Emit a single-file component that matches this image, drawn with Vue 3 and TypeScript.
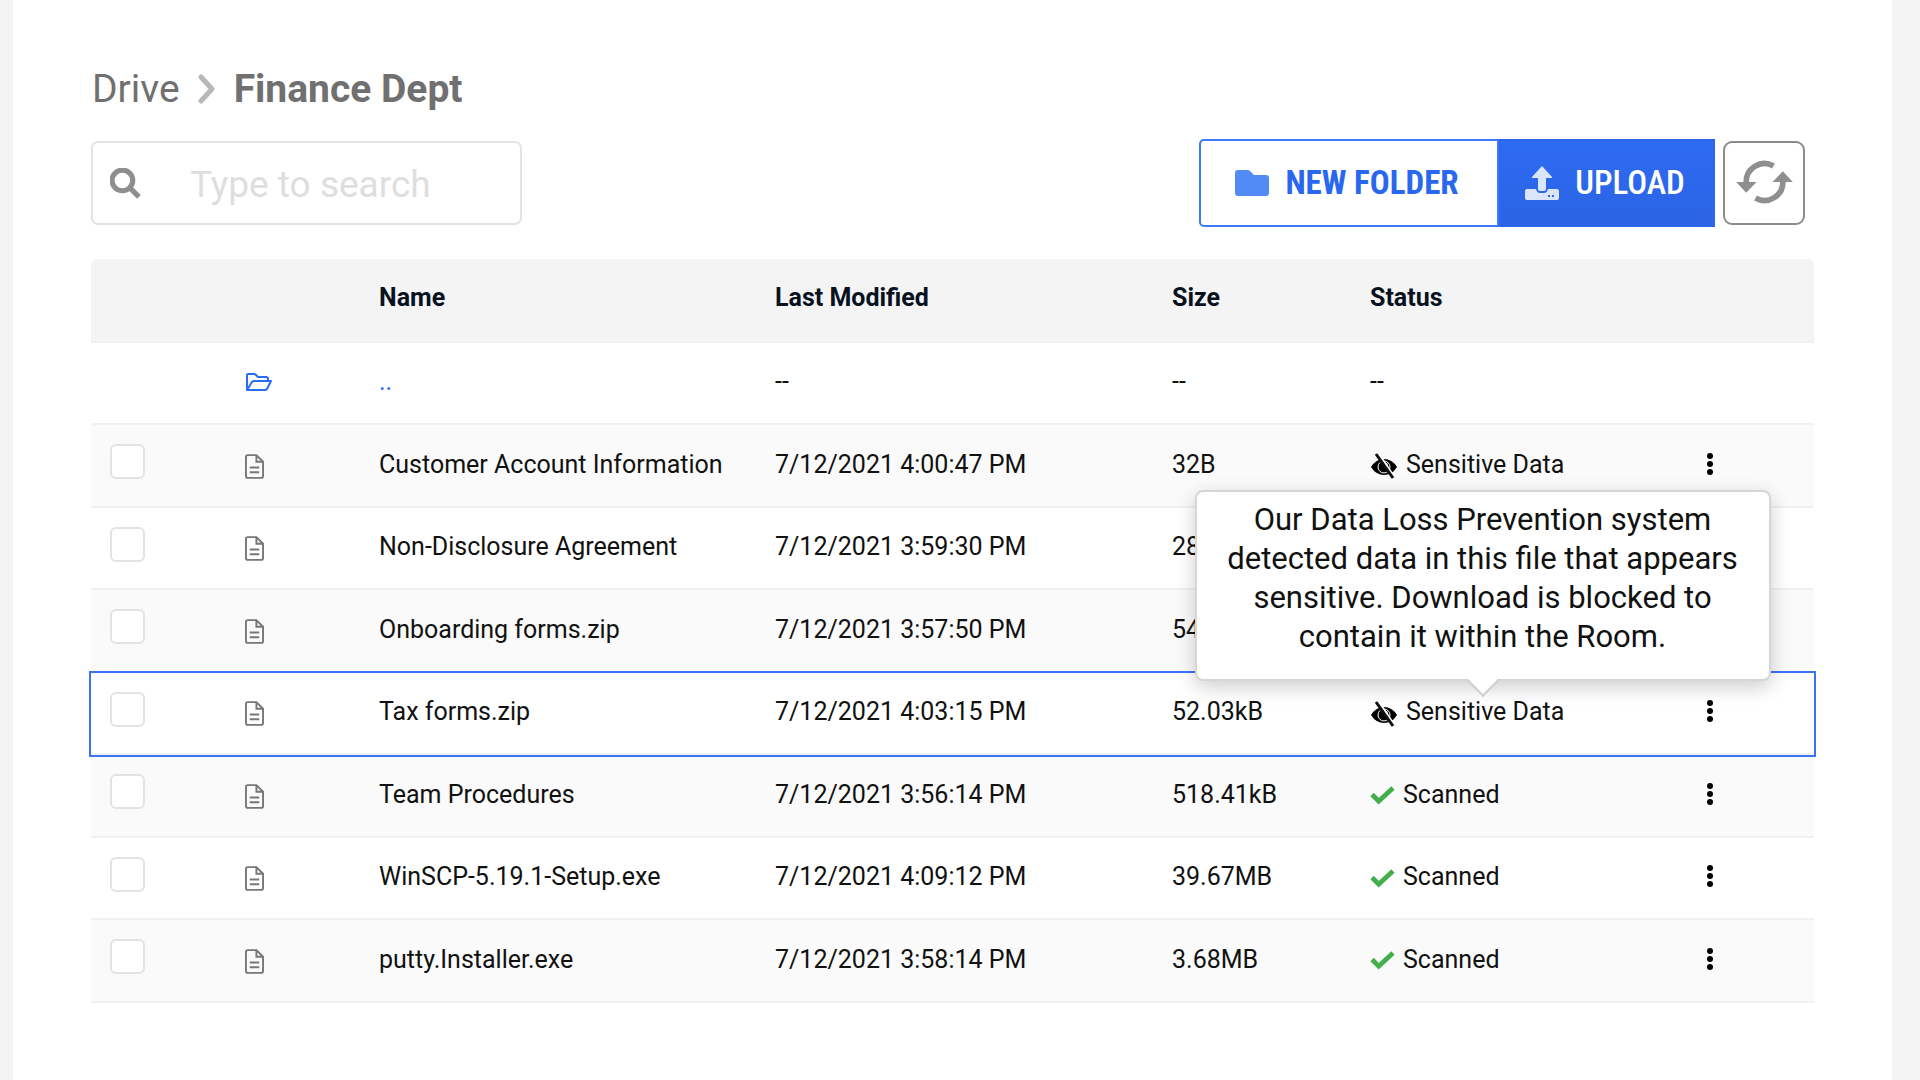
<script setup lang="ts">
import { ref } from 'vue'

type Status = 'sensitive' | 'scanned'

interface DriveFile {
  name: string
  modified: string
  size: string
  status: Status
  selected?: boolean
}

const query = ref('')

const files: DriveFile[] = [
  { name: 'Customer Account Information', modified: '7/12/2021 4:00:47 PM', size: '32B', status: 'sensitive' },
  { name: 'Non-Disclosure Agreement', modified: '7/12/2021 3:59:30 PM', size: '28', status: 'scanned' },
  { name: 'Onboarding forms.zip', modified: '7/12/2021 3:57:50 PM', size: '54', status: 'scanned' },
  { name: 'Tax forms.zip', modified: '7/12/2021 4:03:15 PM', size: '52.03kB', status: 'sensitive', selected: true },
  { name: 'Team Procedures', modified: '7/12/2021 3:56:14 PM', size: '518.41kB', status: 'scanned' },
  { name: 'WinSCP-5.19.1-Setup.exe', modified: '7/12/2021 4:09:12 PM', size: '39.67MB', status: 'scanned' },
  { name: 'putty.Installer.exe', modified: '7/12/2021 3:58:14 PM', size: '3.68MB', status: 'scanned' },
]

const labels: Record<Status, string> = { sensitive: 'Sensitive Data', scanned: 'Scanned' }
</script>

<template>
  <main class="page">
    <nav class="crumbs" aria-label="Breadcrumb">
      <a href="#" class="crumb">Drive</a>
      <svg class="chevron" viewBox="0 0 18 30" aria-hidden="true"><path d="M3 3l11 12L3 27" /></svg>
      <h1 class="current">Finance Dept</h1>
    </nav>

    <div class="toolbar">
      <label class="search">
        <svg viewBox="0 0 30 30" aria-hidden="true"><circle cx="12" cy="12" r="10" /><path d="M19 19l9 9" /></svg>
        <input v-model="query" type="text" placeholder="Type to search" aria-label="Search files" />
      </label>
      <div class="actions">
        <button type="button" class="action new-folder">
          <svg viewBox="0 0 34 26" aria-hidden="true">
            <path d="M3 0h10q1 0 2 1l4 4h12q3 0 3 3v15q0 3-3 3H3q-3 0-3-3V3q0-3 3-3z" />
          </svg>
          NEW FOLDER
        </button>
        <button type="button" class="action upload">
          <svg viewBox="0 0 34 34" aria-hidden="true">
            <path d="M17 0l10 11q1 1-1 1h-5v11q0 2-2 2h-4q-2 0-2-2V12H8q-2 0-1-1z" />
            <path fill-rule="evenodd" d="M2 23h9q1 4 4 4h4q3 0 4-4h9q2 0 2 2v7q0 2-2 2H2q-2 0-2-2v-7q0-2 2-2zM23 29v2h2v-2zM27 29v2h2v-2z" />
          </svg>
          UPLOAD
        </button>
      </div>
      <button type="button" class="refresh" aria-label="Refresh">
        <svg viewBox="0 0 170 126" aria-hidden="true">
          <path class="arc" d="M30 66A55 55 0 0 1 112 15" />
          <path class="head" d="M0 63h61L30 95z" />
          <g transform="rotate(180 85 63)">
            <path class="arc" d="M30 66A55 55 0 0 1 112 15" />
            <path class="head" d="M0 63h61L30 95z" />
          </g>
        </svg>
      </button>
    </div>

    <table class="files">
      <colgroup>
        <col class="c-check" /><col class="c-icon" /><col class="c-name" /><col class="c-date" />
        <col class="c-size" /><col class="c-status" /><col class="c-menu" />
      </colgroup>
      <thead>
        <tr>
          <th></th>
          <th></th>
          <th scope="col" class="split">Name</th>
          <th scope="col" class="split">Last Modified</th>
          <th scope="col" class="split">Size</th>
          <th scope="col" class="split">Status</th>
          <th class="split"></th>
        </tr>
      </thead>
      <tbody>
        <tr>
          <td></td>
          <td>
            <svg class="folder-open" viewBox="0 0 28 20" aria-hidden="true">
              <path d="M2 18V3q0-1 1-1h6q1 0 2 1l2 2h8q2 0 2 2v2M2 18l5-8q1-1 2-1h17l-4 8q-1 1-2 1z" />
            </svg>
          </td>
          <td><a href="#" class="up">..</a></td>
          <td>--</td>
          <td>--</td>
          <td>--</td>
          <td></td>
        </tr>
        <tr v-for="file in files" :key="file.name" :class="{ selected: file.selected }">
          <td><input type="checkbox" class="check" :aria-label="'Select ' + file.name" /></td>
          <td>
            <svg class="doc" viewBox="0 0 20 26" aria-hidden="true">
              <path d="M3 1h9l7 7v15q0 2-2 2H3q-2 0-2-2V3q0-2 2-2zM12 1v7h7M5 14h10M5 19h10" />
            </svg>
          </td>
          <td>{{ file.name }}</td>
          <td>{{ file.modified }}</td>
          <td>{{ file.size }}</td>
          <td>
            <div class="status">
              <svg v-if="file.status === 'sensitive'" class="eye" viewBox="0 0 28 26" aria-hidden="true">
                <path d="M1 14Q6 6 14 6t13 8q-5 8-13 8T1 14z" />
                <circle class="iris" cx="14" cy="14" r="6" />
                <circle class="glint" cx="16" cy="12" r="2" />
                <path class="gap" d="M9 1l16 24" />
                <path class="slash" d="M6 1l17 24" />
              </svg>
              <svg v-else class="tick" viewBox="0 0 26 20" aria-hidden="true"><path d="M2 9l7 7L24 2" /></svg>
              {{ labels[file.status] }}
              <div v-if="file.selected" class="tooltip" role="tooltip">
                Our Data Loss Prevention system detected data in this file that appears sensitive. Download is blocked
                to contain it within the Room.
              </div>
            </div>
          </td>
          <td>
            <button type="button" class="menu" :aria-label="'Actions for ' + file.name">
              <svg viewBox="0 0 8 24" aria-hidden="true">
                <circle cx="4" cy="4" r="3" /><circle cx="4" cy="12" r="3" /><circle cx="4" cy="20" r="3" />
              </svg>
            </button>
          </td>
        </tr>
      </tbody>
    </table>
  </main>
</template>

<style>
body {
  background: #f4f4f4;
}
</style>

<style scoped>
.page {
  box-sizing: border-box;
  min-height: 100vh;
  margin: 0 28px 0 13px;
  padding: 69px 78px 76px;
  background: #fff;
  color: #111;
  font-family: Roboto, sans-serif;
  font-size: 25px;
  line-height: 32px;
}

.crumbs {
  display: flex;
  align-items: center;
  gap: 18px;
  height: 40px;
  padding-left: 1px;
  color: #707070;
  font-size: 39px;
  line-height: 40px;
}

.crumb {
  color: inherit;
  text-decoration: none;
}

.chevron {
  width: 18px;
  height: 30px;
  fill: none;
  stroke: #b8b8b8;
  stroke-width: 5;
  stroke-linecap: round;
  stroke-linejoin: round;
}

.current {
  margin: 0;
  font-size: 39px;
  font-weight: 700;
}

.toolbar {
  display: flex;
  align-items: center;
  height: 88px;
  margin: 30px 9px 32px 0;
}

.search {
  box-sizing: border-box;
  display: flex;
  align-items: center;
  gap: 49px;
  width: 431px;
  height: 84px;
  margin-right: auto;
  padding: 0 0 0 17px;
  border: 2px solid #e3e3e3;
  border-radius: 7px;
}

.search svg {
  flex: none;
  width: 31px;
  height: 31px;
  fill: none;
  stroke: #8e8e8e;
  stroke-width: 5;
}

.search input {
  flex: 1;
  min-width: 0;
  padding: 3px 0 0;
  border: 0;
  outline: 0;
  background: none;
  color: #444;
  font: 37px/44px Roboto, sans-serif;
}

.search input::placeholder {
  color: #dedede;
  opacity: 1;
}

.actions {
  display: flex;
  height: 88px;
  margin-right: 8px;
}

.action {
  box-sizing: border-box;
  display: flex;
  align-items: center;
  justify-content: center;
  gap: 16px;
  padding: 0 4px 0 0;
  border: 2px solid #3c7af7;
  font: 700 33px/40px 'Roboto Condensed', Roboto, sans-serif;
}

.new-folder {
  width: 300px;
  border-radius: 5px 0 0 5px;
  background: #fff;
  color: #2a67f0;
}

.new-folder svg {
  width: 34px;
  height: 26px;
  fill: #528bf6;
}

.upload {
  width: 216px;
  border-color: #2b66ee;
  background: linear-gradient(#2d6bf3, #2b64e4);
  color: #fff;
  font-weight: 500;
}

.upload svg {
  width: 34px;
  height: 34px;
  fill: #d9e5fd;
}

.refresh {
  display: flex;
  align-items: center;
  justify-content: center;
  box-sizing: border-box;
  width: 82px;
  height: 84px;
  padding: 0 0 3px;
  border: 2px solid #8c8c8c;
  border-radius: 9px;
  background: #fff;
}

.refresh svg {
  width: 57px;
  height: 42px;
  overflow: visible;
}

.arc {
  fill: none;
  stroke: #8f8f8f;
  stroke-width: 17;
}

.head {
  fill: #8f8f8f;
}

.files {
  width: 100%;
  border-collapse: separate;
  border-spacing: 0;
  table-layout: fixed;
}

.c-check { width: 136px; }
.c-icon { width: 134px; }
.c-name { width: 396px; }
.c-date { width: 397px; }
.c-size { width: 198px; }
.c-status { width: 261px; }
.c-menu { width: 201px; }

th {
  box-sizing: border-box;
  height: 84px;
  padding: 0 18px 4px;
  border-bottom: 2px solid #f0f0ee;
  background: #f4f4f4;
  color: #08121f;
  font-weight: 700;
  text-align: left;
}

th.split {
  box-shadow: inset 1px 0 #f6f6f6;
}

th:first-child {
  border-top-left-radius: 6px;
}

th:last-child {
  border-top-right-radius: 6px;
}

td {
  box-sizing: border-box;
  height: 82px;
  padding: 0 18px 2px;
  border-bottom: 2px solid #f0f2f1;
  white-space: nowrap;
}

tbody tr:nth-child(even) td {
  height: 83px;
  background: #fafafa;
}

tr.selected {
  outline: 2px solid #3c73f5;
}

td svg {
  display: block;
}

.up {
  color: #2a67f0;
  text-decoration: none;
}

.folder-open {
  width: 28px;
  height: 20px;
  fill: none;
  stroke: #2a6bf5;
  stroke-width: 2;
  stroke-linejoin: round;
}

.doc {
  width: 19px;
  height: 25px;
  margin-top: 3px;
  fill: none;
  stroke: #777;
  stroke-width: 2;
}

.check {
  display: block;
  appearance: none;
  box-sizing: border-box;
  width: 35px;
  height: 35px;
  margin: 0 0 6px 1px;
  border: 2px solid #e3e3e3;
  border-radius: 6px;
  background: #fff;
}

.status {
  position: relative;
  display: flex;
  align-items: center;
  gap: 8px;
}

.eye {
  width: 28px;
  height: 26px;
  margin-top: 3px;
}

.iris {
  fill: none;
  stroke: #fff;
  stroke-width: 1;
}

.glint {
  fill: #ddd;
}

.gap {
  stroke: #fff;
  stroke-width: 2;
}

.slash {
  stroke: #111;
  stroke-width: 3;
}

.tick {
  width: 25px;
  height: 19px;
  margin-top: 2px;
  fill: none;
  stroke: #43ae4b;
  stroke-width: 5;
}

.tooltip {
  position: absolute;
  z-index: 2;
  bottom: calc(100% + 15px);
  left: 50%;
  box-sizing: border-box;
  width: 576px;
  padding: 8px 20px 23px;
  border: 2px solid #d6d6d6;
  border-radius: 8px;
  background: #fff;
  box-shadow: 0 6px 20px rgba(0, 0, 0, 0.2);
  font-size: 31px;
  line-height: 39px;
  text-align: center;
  white-space: normal;
  transform: translateX(-50%);
}

.tooltip::after {
  position: absolute;
  bottom: -13px;
  left: 50%;
  box-sizing: border-box;
  width: 24px;
  height: 24px;
  border: solid #cfcfcf;
  border-width: 0 2px 2px 0;
  background: linear-gradient(135deg, transparent 50%, #fff 50%);
  content: '';
  transform: translateX(-50%) rotate(45deg);
}

.menu {
  display: block;
  margin: 0 0 2px 75px;
  padding: 0;
  border: 0;
  background: none;
}

.menu svg {
  width: 8px;
  height: 24px;
}
</style>
